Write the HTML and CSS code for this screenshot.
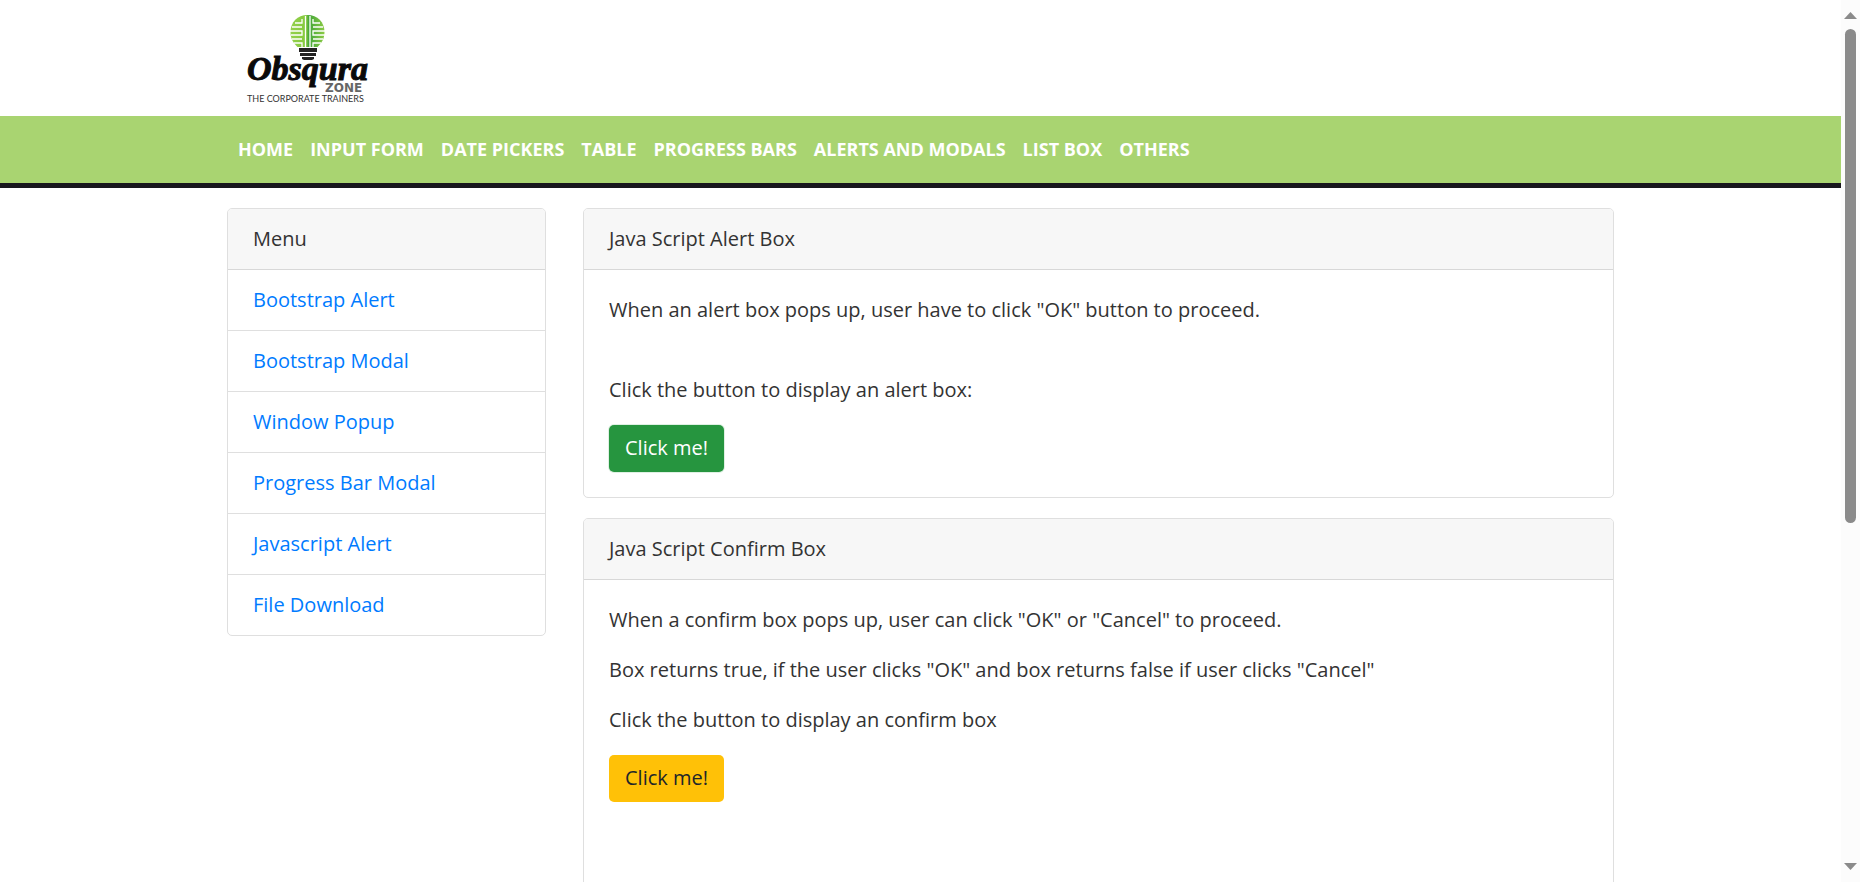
FILE: index.html
```html
<!DOCTYPE html>
<html lang="en">
<head>
<meta charset="utf-8">
<title>Obsqura Zone</title>
<link rel="stylesheet" href="styles.css">
</head>
<body>
<div class="page">
  <header class="header">
    <div class="container">
      <a class="brand" href="#" aria-label="Obsqura Zone home">
        <svg class="logo" width="128" height="96" viewBox="0 0 128 96">
          <defs>
            <linearGradient id="bulb" x1="0" x2="1" y1="0" y2="0">
              <stop offset="0" stop-color="#93d04b"/><stop offset=".46" stop-color="#86ca3e"/>
              <stop offset=".54" stop-color="#43a53a"/><stop offset="1" stop-color="#8ccb45"/>
            </linearGradient>
          </defs>
          <path fill="url(#bulb)" d="M62.500 5c10 0 17 7 17 17 0 7-3 11-7 15h-20c-4-4-7-8-7-15 0-10 7-17 17-17z"/>
          <path fill="none" stroke="#fff" stroke-width="1.300" d="M60.500 6v32M65 6v32M57 9v4h-7M57 17H47M45 21h12v4H46M57 29H47M49 33h8v4M68 9v4h7M68 17h10M80 21H68v4h12M68 29h10M76 33h-8v4"/>
          <path fill="#222" d="M54 38h18v4H54zM55 43h16v3H55zM57 47h12v2l-2 1h-8l-2-1z"/>
          <text class="logo-name" x="2" y="70">Obsqura</text>
          <text class="logo-zone" x="80" y="82">ZONE</text>
          <text class="logo-tag" x="2" y="92">THE CORPORATE TRAINERS</text>
        </svg>
      </a>
    </div>
  </header>
  <nav class="navbar">
    <div class="container nav-list">
      <a href="#">HOME</a>
      <a href="#">INPUT FORM</a>
      <a href="#">DATE PICKERS</a>
      <a href="#">TABLE</a>
      <a href="#">PROGRESS BARS</a>
      <a href="#">ALERTS AND MODALS</a>
      <a href="#">LIST BOX</a>
      <a href="#">OTHERS</a>
    </div>
  </nav>
  <main class="container content">
    <aside class="card">
      <div class="card-header">Menu</div>
      <ul class="menu">
        <li><a href="#">Bootstrap Alert</a></li>
        <li><a href="#">Bootstrap Modal</a></li>
        <li><a href="#">Window Popup</a></li>
        <li><a href="#">Progress Bar Modal</a></li>
        <li><a href="#">Javascript Alert</a></li>
        <li><a href="#">File Download</a></li>
      </ul>
    </aside>
    <div class="cards">
      <section class="card">
        <div class="card-header">Java Script Alert Box</div>
        <div class="card-body">
          <p>When an alert box pops up, user have to click "OK" button to proceed.<br><br></p>
          <p>Click the button to display an alert box:</p>
          <button class="btn btn-success" type="button">Click me!</button>
        </div>
      </section>
      <section class="card">
        <div class="card-header">Java Script Confirm Box</div>
        <div class="card-body card-body-tall">
          <p>When a confirm box pops up, user can click "OK" or "Cancel" to proceed.</p>
          <p>Box returns true, if the user clicks "OK" and box returns false if user clicks "Cancel"</p>
          <p>Click the button to display an confirm box</p>
          <button class="btn btn-warning" type="button">Click me!</button>
        </div>
      </section>
    </div>
  </main>
</div>
<div class="scrollbar" aria-hidden="true">
  <svg width="13" height="7" viewBox="0 0 13 7"><path fill="#8b8b8b" d="M0 7 6.500 0 13 7z"/></svg>
  <div class="track"><div class="thumb"></div></div>
  <svg width="13" height="7" viewBox="0 0 13 7"><path fill="#8b8b8b" d="M0 0 6.500 7 13 0z"/></svg>
</div>
</body>
</html>
```
FILE: styles.css
```css
* { box-sizing: border-box; }

body {
  display: flex;
  height: 100vh;
  margin: 0;
  overflow: hidden;
  background: #fff;
  color: #333;
  font: 20px/30px "Open Sans", sans-serif;
}

a { color: #007bff; text-decoration: none; }

.page { flex: 1; min-width: 0; overflow: hidden; }

.container {
  max-width: 1425px;
  margin: 0 auto;
  padding: 0 19px;
}

.header { padding: 10px 0; }
.brand { display: block; margin-left: 18px; }
.logo { display: block; }
.logo .logo-name {
  font: italic 700 34px "Liberation Serif", serif;
  fill: #0a0a0a;
  stroke: #0a0a0a;
  stroke-width: 1px;
}
.logo .logo-zone { font: 700 12px "DejaVu Sans", sans-serif; fill: #666; }
.logo .logo-tag { font: 9px Lato, sans-serif; fill: #333; }

.navbar {
  padding: 18px 0 19px;
  background: #a9d471;
  border-bottom: 5px solid #17161c;
}
.nav-list { display: flex; gap: 17px; padding: 0 30px; }
.nav-list a {
  color: #fff;
  font-size: 18px;
  font-weight: 700;
  white-space: nowrap;
}

.content {
  display: grid;
  grid-template-columns: 319px minmax(0, 1fr);
  gap: 37px;
  align-items: start;
  padding-top: 20px;
}
.cards { display: grid; gap: 20px; }

.card {
  border: 1px solid #dfdfdf;
  border-radius: 5px;
  background: #fff;
  overflow: hidden;
}
.card-header {
  padding: 15px 25px;
  background: #f7f7f7;
  border-bottom: 1px solid #d8d8d8;
}
.card-body { padding: 25px; }
.card-body-tall { padding-bottom: 125px; }
.card-body p { margin: 0 0 20px; }

.menu { margin: 0; padding: 0; list-style: none; }
.menu li { padding: 15px 25px; }
.menu li + li { border-top: 1px solid #dfdfdf; }

.btn {
  display: block;
  padding: 8px 16px 9px;
  border: 0;
  border-radius: 5px;
  font: inherit;
}
.btn-success { background: #26953f; color: #fff; box-shadow: 0 0 0 1px #dff0e3; }
.btn-warning { background: #ffc107; color: #212529; }

.scrollbar {
  display: flex;
  flex-direction: column;
  align-items: center;
  gap: 10px;
  width: 19px;
  padding: 12px 0;
  background: #fcfcfc;
}
.track { flex: 1; width: 11px; }
.thumb { height: 60%; border-radius: 6px; background: #8b8b8b; }
```
